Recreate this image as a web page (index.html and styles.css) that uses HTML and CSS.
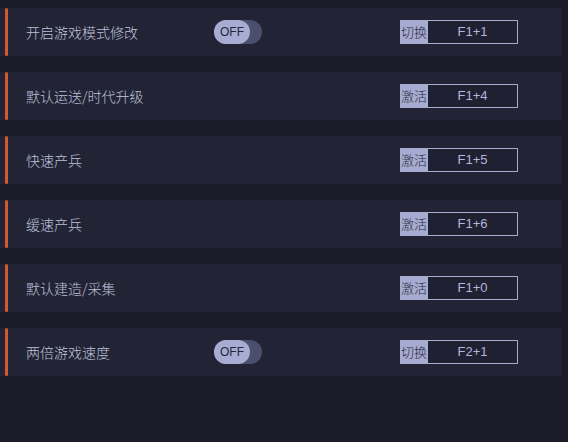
FILE: index.html
```html
<!DOCTYPE html>
<html lang="zh">
<head>
<meta charset="utf-8">
<link rel="stylesheet" href="styles.css">
</head>
<body>
<div class="list">
  <div class="row">
    <span class="bar"></span>
    <span class="name">开启游戏模式修改</span>
    <span class="slot"><span class="toggle"><span class="knob">OFF</span></span></span>
    <span class="hotkey"><span class="tag">切换</span><span class="key">F1+1</span></span>
  </div>
  <div class="row">
    <span class="bar"></span>
    <span class="name">默认运送/时代升级</span>
    <span class="slot"></span>
    <span class="hotkey"><span class="tag">激活</span><span class="key">F1+4</span></span>
  </div>
  <div class="row">
    <span class="bar"></span>
    <span class="name">快速产兵</span>
    <span class="slot"></span>
    <span class="hotkey"><span class="tag">激活</span><span class="key">F1+5</span></span>
  </div>
  <div class="row">
    <span class="bar"></span>
    <span class="name">缓速产兵</span>
    <span class="slot"></span>
    <span class="hotkey"><span class="tag">激活</span><span class="key">F1+6</span></span>
  </div>
  <div class="row">
    <span class="bar"></span>
    <span class="name">默认建造/采集</span>
    <span class="slot"></span>
    <span class="hotkey"><span class="tag">激活</span><span class="key">F1+0</span></span>
  </div>
  <div class="row">
    <span class="bar"></span>
    <span class="name">两倍游戏速度</span>
    <span class="slot"><span class="toggle"><span class="knob">OFF</span></span></span>
    <span class="hotkey"><span class="tag">切换</span><span class="key">F2+1</span></span>
  </div>
</div>
</body>
</html>
```
FILE: styles.css
```css
html, body {
  margin: 0;
  padding: 0;
  background: #1b1c28;
  width: 568px;
  height: 442px;
  overflow: hidden;
}
body {
  font-family: "Noto Sans CJK SC", "Noto Sans", sans-serif;
  color: #bfc1da;
}
.list {
  display: flex;
  flex-direction: column;
  gap: 16px;
  padding-top: 8px;
}
.row {
  width: 562px;
  height: 48px;
  background: #222436;
  display: flex;
  align-items: center;
}
.bar {
  width: 3px;
  height: 48px;
  margin-left: 5px;
  border-radius: 2px;
  background: #d35a2c;
}
.name {
  margin-left: 18px;
  width: 188px;
  font-size: 14px;
  font-weight: 300;
  line-height: 20px;
}
.slot {
  width: 186px;
  display: flex;
  align-items: center;
}
.toggle {
  width: 48px;
  height: 24px;
  border-radius: 12px;
  background: #4b4e6c;
  display: flex;
}
.knob {
  width: 36px;
  height: 24px;
  border-radius: 12px;
  background: #a8acd2;
  color: #25273a;
  font-family: "Liberation Sans", Arial, sans-serif;
  font-size: 12px;
  line-height: 24px;
  text-align: center;
}
.hotkey {
  display: flex;
  height: 24px;
}
.tag {
  width: 28px;
  height: 24px;
  background: #a7abd0;
  color: #2a2c40;
  font-size: 13px;
  font-weight: 300;
  line-height: 24px;
  text-align: center;
  white-space: nowrap;
  overflow: hidden;
}
.key {
  width: 89px;
  height: 22px;
  border: 1px solid #a7abd0;
  border-left: none;
  background: #1f2032;
  color: #b3b6d8;
  font-family: "Liberation Sans", Arial, sans-serif;
  font-size: 13px;
  line-height: 22px;
  text-align: center;
}
```
